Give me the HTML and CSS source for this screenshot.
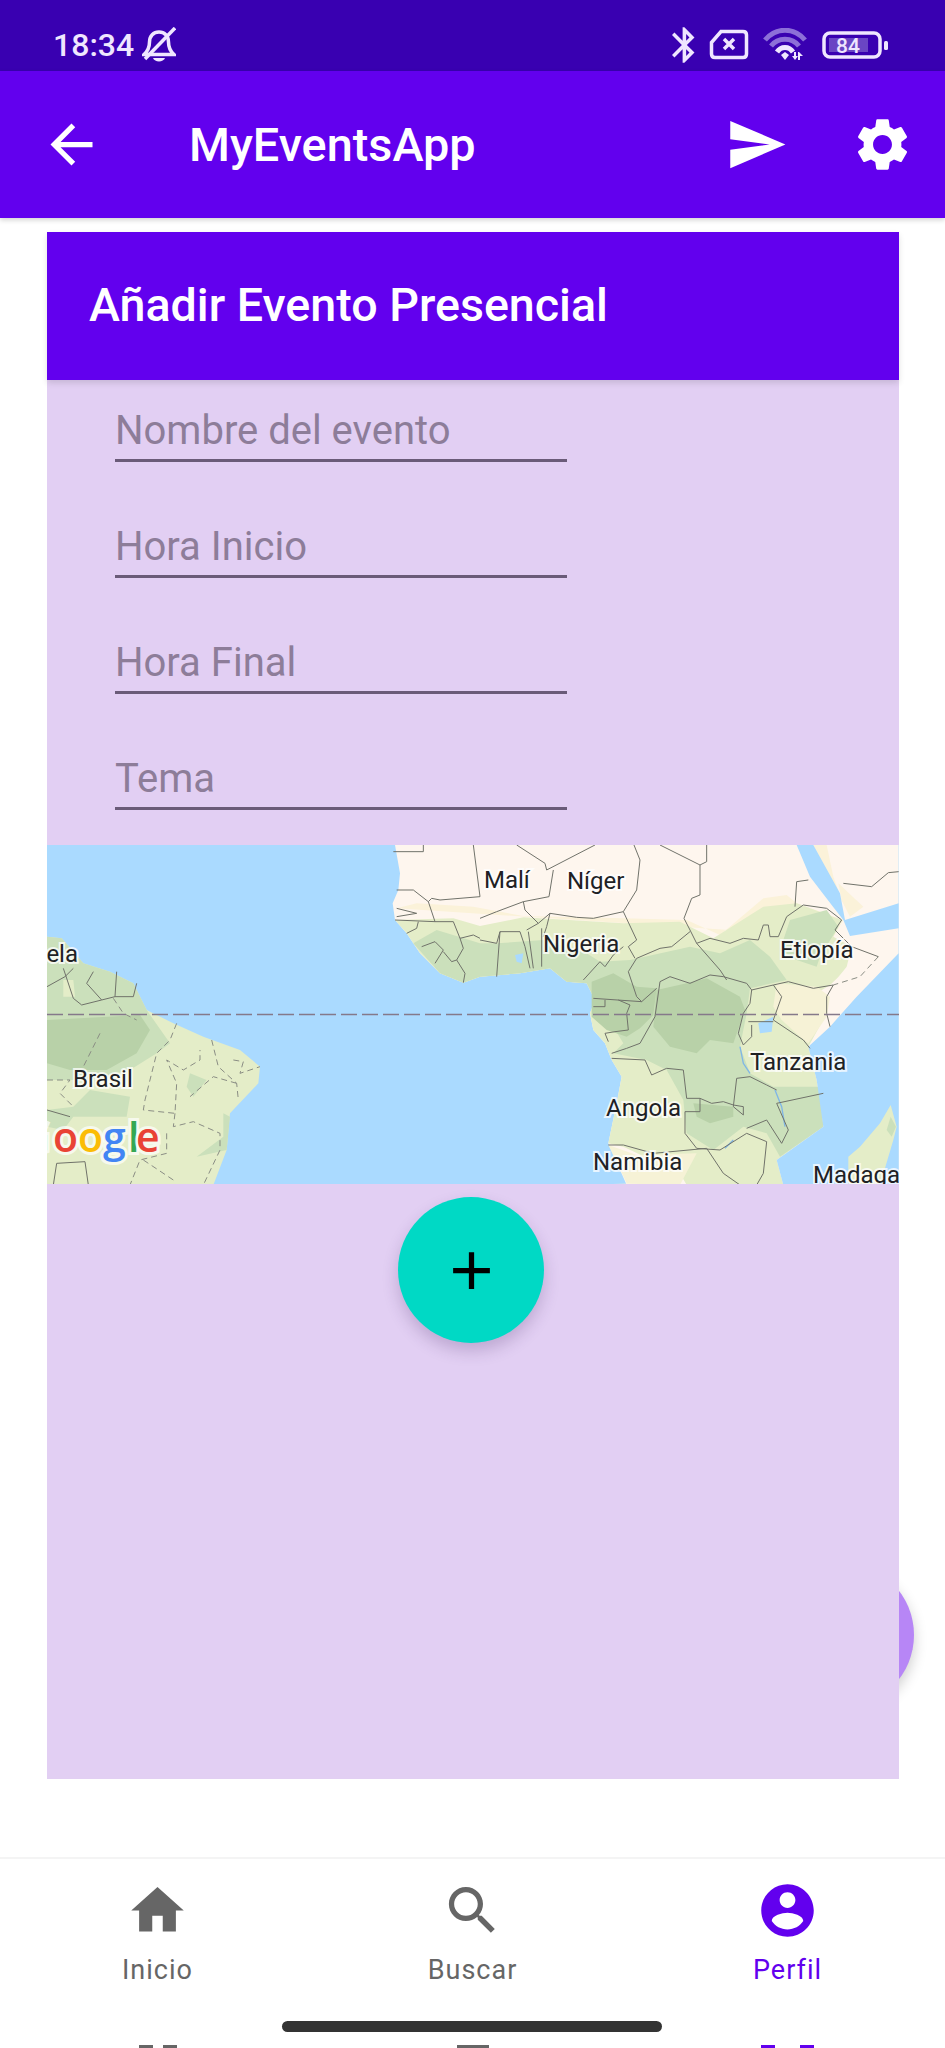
FILE: index.html
```html
<!DOCTYPE html>
<html lang="en">

<head>
    <meta charset="UTF-8">
    <meta name="viewport" content="width=device-width, initial-scale=1.0">
    <title>MyEventsApp</title>
    <link rel="stylesheet" href="styles.css">
</head>

<body>

    <div class="status-bar">
        <span class="status-time">18:34</span>
        <svg class="bell-icon" viewBox="0 0 34 36" width="34" height="36">
            <path class="status-line" d="M2 27.5C6 24 7.500 20 7.500 15C7.500 9 11.500 5 17 5C22.500 5 26.500 9 26.500 15C26.500 20 28 24 32 27.500Z"/>
            <path class="status-line" d="M33 1L3 32"/>
            <path class="status-fill" d="M11 31h12c-1.500 4.500-10.500 4.500-12 0z"/>
        </svg>
        <span class="status-spacer"></span>
        <svg class="bluetooth-icon" viewBox="5 2 13 20" width="23" height="36">
            <path class="status-fill" d="M17.710 7.710L12 2h-1v7.590L6.410 5 5 6.410 10.590 12 5 17.590 6.410 19 11 14.410V22h1l5.710-5.710-4.300-4.290 4.300-4.290zM13 5.830l1.880 1.880L13 9.590V5.830zm1.880 10.460L13 18.170v-3.760l1.880 1.880z"/>
        </svg>
        <svg class="sim-icon" viewBox="0 0 40 31" width="40" height="31">
            <path class="status-line" d="M12 2.500H34Q37.500 2.500 37.500 6V25Q37.500 28.500 34 28.500H6Q2.500 28.500 2.500 25V13.500Z"/>
            <path class="status-line" d="M15 10L25 20M25 10L15 20"/>
        </svg>
        <svg class="wifi-icon" viewBox="0 0 44 33" width="44" height="33">
            <path class="wifi-dim" d="M2 12C13 -1 31 -1 42 12"/>
            <path class="wifi-dim" d="M8 18C15 9 29 9 36 18"/>
            <path class="wifi-bright" d="M14 24C18 18 26 18 30 24"/>
            <path class="status-fill" d="M18 27L22 24L26 27L22 32Z"/>
            <path class="status-fill" d="M31 24h2v4h2l-3 4-3-4h2zM37 32h-2v-8h1l4 4h-3z"/>
        </svg>
        <svg class="battery-icon" viewBox="0 0 66 28" width="66" height="28">
            <rect class="status-line" x="2" y="2" width="56" height="24" rx="6"/>
            <rect class="battery-level" x="7" y="7" width="39" height="14"/>
            <text class="battery-text" x="26" y="22">84</text>
            <rect class="status-fill" x="62" y="10" width="4" height="9" rx="1.500"/>
        </svg>
    </div>

    <div class="toolbar">
        <svg class="icon-63 back-icon" viewBox="0 0 24 24"><path d="M20 11H7.830l5.590-5.590L12 4l-8 8 8 8 1.410-1.410L7.830 13H20v-2z"/></svg>
        <span class="toolbar-title">MyEventsApp</span>
        <span class="status-spacer"></span>
        <svg class="icon-63" viewBox="0 0 24 24"><path d="M2.010 21L23 12 2.010 3 2 10l15 2-15 2z"/></svg>
        <svg class="icon-63 settings-icon" viewBox="0 0 24 24"><path d="M19.140 12.940c.04-.3.06-.61.06-.94 0-.32-.02-.64-.07-.94l2.030-1.580c.18-.14.23-.41.12-.61l-1.920-3.320c-.12-.22-.37-.29-.59-.22l-2.390.96c-.5-.38-1.030-.7-1.620-.94l-.36-2.540c-.04-.24-.24-.41-.48-.41h-3.840c-.24 0-.43.17-.47.41l-.36 2.540c-.59.24-1.130.57-1.620.94l-2.390-.96c-.22-.08-.47 0-.59.22L2.740 8.870c-.12.21-.08.47.12.61l2.030 1.580c-.05.3-.09.63-.09.94s.02.64.07.94l-2.030 1.580c-.18.14-.23.41-.12.61l1.920 3.320c.12.22.37.29.59.22l2.390-.96c.5.38 1.030.7 1.620.94l.36 2.540c.05.24.24.41.48.41h3.840c.24 0 .44-.17.47-.41l.36-2.540c.59-.24 1.130-.56 1.620-.94l2.390.96c.22.08.47 0 .59-.22l1.920-3.320c.12-.22.07-.47-.12-.61l-2.010-1.580zM12 15.600c-1.980 0-3.600-1.620-3.600-3.600s1.620-3.600 3.600-3.600 3.600 1.620 3.600 3.600-1.620 3.600-3.600 3.600z"/></svg>
    </div>

    <div class="content">
        <div class="back-fab"></div>

        <div class="event-card">
            <div class="card-header">Añadir Evento Presencial</div>

            <div class="event-form">
                <div class="field">Nombre del evento</div>
                <div class="field">Hora Inicio</div>
                <div class="field">Hora Final</div>
                <div class="field">Tema</div>
            </div>

            <svg class="map" viewBox="0 0 852 339" width="852" height="339">
                <rect class="ocean" width="852" height="339"/>

                <!-- africa, coordinates taken at 3x -->
                <g transform="translate(433,-5) scale(.33333)">
                    <path class="desert" d="M-255 15H1256V1035H440L385 910L410 790L425 710L395 660L375 610L340 570L330 520L345 480L320 430L260 425L210 385L120 400L0 410L-50 428L-120 400L-180 340L-220 280L-255 240L-262 190L-245 150L-240 100Z"/>
                    <path class="sand" d="M-250 205L-190 190L-20 200L130 228L430 235L620 240L720 285L850 175L920 165L950 190L1090 240L1060 290Z"/>
                    <path class="sand" d="M1000 15L1040 15L1060 110L1085 180L1075 130L1150 200L1110 230Z"/>
                    <path class="land" d="M-255 240L-80 235L0 258L130 232L430 250L600 245L700 295L850 200L950 190L1085 240L1060 290L1115 320L1140 350L1050 435L1010 460L1040 520L985 620L1010 720L1030 860L890 960L910 1035H620L600 1000L430 920L385 910L410 790L425 710L395 660L375 610L340 570L330 520L345 480L320 430L260 425L210 385L120 400L0 410L-50 428L-120 400L-180 340L-220 280Z"/>
                    <path class="desert" d="M1115 320L1195 350L1140 420L1060 435L1050 560L1010 600L1040 470L1060 430L1100 380Z"/>
                    <path class="sand-light" d="M890 430L1010 440L1050 470L1040 530L985 610L960 590L905 540L880 500Z"/>
                    <path class="sand-light" d="M400 1030L440 1030L385 915L470 945L650 940L600 1035Z"/>
                    <path class="forest" d="M0 310L50 310L190 300L320 340L360 365L450 360L630 320L720 340L810 300L870 350L920 420L810 445L800 520L780 620L810 700L880 740L1020 740L1030 860L900 950L860 880L790 860L700 930L620 880L610 780L560 690L500 660L400 640L430 610L400 560L345 480L320 430L260 425L210 385L120 400L0 410Z"/>
                    <path class="forest" d="M-200 310L-130 270L0 310V410L-50 428L-120 400Z"/>
                    <path class="forest" d="M930 240L1040 210L1075 260L1020 350L1010 380L950 360L900 330Z"/>
                    <path class="forest-dark" d="M335 425L400 400L470 440L530 445L520 525L480 565L440 590L380 570L335 530Z"/>
                    <path class="forest-dark" d="M530 450L620 430L680 415L780 470L795 510L760 610L690 600L650 640L570 620L520 560Z"/>
                    <path class="forest-dark" d="M640 790L760 800L760 830L690 850L650 830Z"/>
                    <path class="ocean" d="M1256 340L1130 470L1050 560L985 620L1010 720L1030 860L890 960L910 1035H1256Z"/>
                    <path class="land" d="M1232 795L1250 860L1240 900L1200 1035H1105L1105 950L1140 920L1200 850Z"/>
                    <path class="forest" d="M1232 830L1248 860L1235 890L1220 870Z"/>
                    <path class="ocean" d="M950 15H1000L1080 160L1095 240L1256 190V265L1110 288L1090 240L1055 195L990 110Z"/>
                    <path class="ocean" d="M835 550L880 530L875 575L840 580Z"/>
                    <path class="ocean" d="M105 345L130 340L125 370L110 365Z"/>
                    <path class="river" d="M780 620L790 670L810 700M885 750L905 800L915 860M735 925L760 900"/>
                    <path class="border" d="M110 15L195 70L200 90L345 15M220 90L207 170L130 185L50 215L0 235"/>
                    <path class="border" d="M130 185L135 210L175 250L210 220L290 232L340 235L430 215L470 150L480 60L462 15"/>
                    <path class="border" d="M540 15L660 75L680 65L680 15M660 75L660 165L635 175L612 235L630 270L650 310L690 295L750 310L790 295L835 300L850 255L865 255L870 290L895 290"/>
                    <path class="border" d="M630 275L575 320L540 325L470 355L445 395L470 470L485 485M430 215L470 300L445 320L465 355M210 220L200 260L190 290M650 310L720 390L740 420"/>
                    <path class="border" d="M540 425L570 410L630 430L690 405L730 410L800 430L815 450L880 435L925 425L1000 445L1060 435L1040 470L1040 520L1050 560"/>
                    <path class="border" d="M880 435L905 470L880 540L970 600L990 625M805 545H880M815 450L810 490L790 520L775 580L790 615L815 590L815 555"/>
                    <path class="border" d="M540 425L525 530L480 610L440 625L395 640M395 655L495 660L515 705L560 685L610 690L620 775L660 775L695 790L730 785L760 795L790 800L790 825L760 800L770 715L810 710L860 735L890 750"/>
                    <path class="border" d="M660 775L660 815L615 815L615 880L650 925L720 930L800 880L860 905L850 1000L830 1035M385 915L430 915L520 940L680 925L730 1000L780 1035"/>
                    <path class="border" d="M800 865L860 840L905 910L925 870L890 790L1030 760M340 475L485 485L530 445M340 500L375 500L375 480M415 480L450 495L440 520L445 570L405 575L375 580L385 605"/>
                    <path class="border" d="M895 290L920 230L970 195L1040 205L1085 240L1065 270L1115 320L1195 350M945 200L950 125L985 120M1090 130L1175 140L1225 98L1256 95"/>
                    <path class="border" d="M0 300L50 310L60 275L120 275L135 320L150 385M60 275L50 410M145 275L160 385M185 265L185 380M175 250L140 270M360 365L310 420M360 365L375 380L400 345L430 320"/>
                    <path class="border-dash" d="M1195 350L1140 410L1060 435"/>
                    <!-- west africa -->
                    <g transform="translate(-1350,0)">
                        <path class="border" d="M1090 35L1180 35L1180 15M1330 15L1350 170L1230 180L1205 175L1195 185L1150 150L1100 150M1195 185L1215 245L1270 245L1290 295L1330 285L1350 295"/>
                        <path class="border" d="M1100 205L1160 220L1100 230M1095 240L1215 245M1165 245L1160 265L1130 280M1290 295L1300 325L1280 360L1305 400L1300 428M1175 320L1215 305L1240 330L1215 370M1240 335L1265 365L1280 360"/>
                    </g>
                </g>

                <!-- south america -->
                <g transform="translate(-17,-5) scale(.33333)">
                    <path class="land" d="M51 290L95 295L160 370L240 395L310 430L350 510L430 550L520 590L630 630L690 680L685 730L600 820L590 930L550 1035H51Z"/>
                    <path class="forest" d="M51 290L95 295L160 370L240 395L310 430L350 510L420 610L380 640L300 690L170 720L51 720Z"/>
                    <path class="forest-dark" d="M51 540L330 525L360 570L320 640L230 690L120 690L51 670Z"/>
                    <path class="forest" d="M51 810L130 800L180 750L300 770L290 830L240 830L130 830L100 870L51 860Z"/>
                    <path class="forest" d="M480 700L530 720L490 770L470 740ZM580 820L600 830L590 930L500 950L580 890Z"/>
                    <path class="land" d="M100 420L130 420L135 470L100 470Z"/>
                    <path class="border" d="M51 440L105 410L130 385M100 385L130 475L155 495L215 480L255 470L310 470L320 430M190 395L170 430L215 480M260 395L255 470"/>
                    <path class="border" d="M80 970L165 965L175 1035M70 1035L80 970M51 810L120 830"/>
                    <path class="border-dash" d="M250 475L280 520L320 540M440 550L420 600L380 640L360 720L345 780L340 810L435 820L440 730L410 660L460 690L510 660L510 630M210 580L160 680M545 600L565 680L620 730L625 780M620 730L550 710L480 770"/>
                    <path class="border-dash" d="M435 820L430 860L490 845L570 880L570 930L520 1035M410 880L410 940L330 960L300 1035M340 960L430 1020M610 660L640 665L630 700L690 680M51 720L120 720L90 760L130 800"/>
                </g>

                <line class="equator" x1="0" y1="169.500" x2="852" y2="169.500"/>

                <text class="map-label" x="31" y="117" text-anchor="end">Venezuela</text>
                <text class="map-label" x="26" y="242">Brasil</text>
                <text class="map-label" x="437" y="43">Malí</text>
                <text class="map-label" x="520" y="44">Níger</text>
                <text class="map-label" x="496" y="107">Nigeria</text>
                <text class="map-label" x="733" y="113">Etiopía</text>
                <text class="map-label" x="703" y="225">Tanzania</text>
                <text class="map-label" x="559" y="271">Angola</text>
                <text class="map-label" x="546" y="325">Namibia</text>
                <text class="map-label" x="766" y="338">Madagascar</text>

                <text class="map-logo" x="-27 6 31 56 81 89" y="307"><tspan class="logo-blue">G</tspan><tspan class="logo-red">o</tspan><tspan class="logo-yellow">o</tspan><tspan class="logo-blue">g</tspan><tspan class="logo-green">l</tspan><tspan class="logo-red">e</tspan></text>
            </svg>

            <div class="card-bottom">
                <div class="add-fab">
                    <svg class="icon-63" viewBox="0 0 24 24"><path d="M19 13h-6v6h-2v-6H5v-2h6V5h2v6h6v2z"/></svg>
                </div>
            </div>
        </div>
    </div>

    <div class="bottom-nav">
        <div class="nav-items">
            <div class="nav-item">
                <svg class="icon-63" viewBox="0 0 24 24"><path d="M10 20v-6h4v6h5v-8h3L12 3 2 12h3v8z"/></svg>
                <span class="nav-label">Inicio</span>
            </div>
            <div class="nav-item">
                <svg class="icon-63" viewBox="0 0 24 24"><path d="M15.500 14h-.79l-.28-.27C15.410 12.590 16 11.110 16 9.500 16 5.910 13.090 3 9.500 3S3 5.910 3 9.500 5.910 16 9.500 16c1.610 0 3.090-.59 4.230-1.570l.27.28v.79l5 4.990L20.490 19l-4.990-5zm-6 0C7.010 14 5 11.990 5 9.500S7.010 5 9.500 5 14 7.010 14 9.500 11.990 14 9.500 14z"/></svg>
                <span class="nav-label">Buscar</span>
            </div>
            <div class="nav-item active">
                <svg class="icon-63" viewBox="0 0 24 24"><path d="M12 2C6.480 2 2 6.480 2 12s4.480 10 10 10 10-4.480 10-10S17.520 2 12 2zm0 3c1.660 0 3 1.340 3 3s-1.340 3-3 3-3-1.340-3-3 1.340-3 3-3zm0 14.200c-2.500 0-4.710-1.280-6-3.220.03-1.990 4-3.080 6-3.080 1.990 0 5.970 1.090 6 3.080-1.290 1.940-3.500 3.220-6 3.220z"/></svg>
                <span class="nav-label">Perfil</span>
            </div>
        </div>

        <div class="nav-peek">
            <div class="peek-cell"><i class="peek-bar"></i><i class="peek-bar"></i></div>
            <div class="peek-cell"><i class="peek-wide"></i></div>
            <div class="peek-cell peek-active"><i class="peek-bar"></i><i class="peek-bar"></i></div>
        </div>

        <div class="home-indicator"></div>
    </div>

</body>

</html>
```

FILE: styles.css
```css
body {
    font-family: Roboto, "Liberation Sans", sans-serif;
    display: flex;
    flex-direction: column;
    width: 945px;
    height: 2048px;
    margin: 0;
    overflow: hidden;
    background-color: #fff;
}

.icon-63 {
    width: 63px;
    height: 63px;
    flex: none;
    fill: currentColor;
}

/* status bar */
.status-bar {
    display: flex;
    align-items: center;
    height: 71px;
    flex: none;
    padding: 18px 57px 0 53px;
    box-sizing: border-box;
    background-color: #3900b1;
    color: #efe6ff;
}

.status-time {
    font-size: 32px;
    font-weight: 500;
    margin-right: 8px;
}

.status-spacer {
    flex: 1;
}

.status-line {
    fill: none;
    stroke: #efe6ff;
    stroke-width: 3.5;
}

.status-fill {
    fill: #efe6ff;
}

.bluetooth-icon {
    margin-right: 14px;
}

.sim-icon {
    margin-right: 14px;
}

.wifi-icon {
    margin-right: 15px;
}

.wifi-dim,
.wifi-bright {
    fill: none;
    stroke-width: 5;
}

.wifi-dim {
    stroke: #8d6fd8;
}

.wifi-bright {
    stroke: #efe6ff;
}

.battery-level {
    fill: #6a45c4;
}

.battery-text {
    fill: #efe6ff;
    font-size: 21px;
    font-weight: 500;
    text-anchor: middle;
}

/* toolbar */
.toolbar {
    display: flex;
    align-items: center;
    height: 147px;
    flex: none;
    padding: 0 31px 0 40px;
    box-sizing: border-box;
    background-color: #6200ee;
    color: #fff;
    box-shadow: 0 2px 5px rgba(0, 0, 0, .18);
    position: relative;
}

.toolbar-title {
    font-size: 46.800px;
    font-weight: 500;
    margin-left: 86px;
}

.settings-icon {
    margin-left: 63px;
}

/* content */
.content {
    flex: 1;
    padding-top: 14px;
    padding-left: 47px;
    position: relative;
}

.back-fab {
    position: absolute;
    left: 768px;
    top: 1344px;
    width: 146px;
    height: 146px;
    border-radius: 50%;
    background-color: #b786f6;
    box-shadow: 0 6px 14px rgba(0, 0, 0, .2);
}

.event-card {
    display: flex;
    flex-direction: column;
    width: 852px;
    height: 1547px;
    background-color: #e2cff3;
    position: relative;
}

.card-header {
    display: flex;
    align-items: center;
    height: 148px;
    flex: none;
    padding-left: 42px;
    padding-bottom: 2px;
    box-sizing: border-box;
    background-color: #6200ee;
    color: #fff;
    font-size: 46.600px;
    font-weight: 500;
    box-shadow: 0 3px 6px rgba(0, 0, 0, .12);
    position: relative;
}

.event-form {
    display: flex;
    flex-direction: column;
    gap: 46px;
    padding: 11px 0 35px 68px;
}

.field {
    display: flex;
    align-items: flex-end;
    width: 452px;
    height: 71px;
    padding-bottom: 4px;
    box-sizing: border-box;
    border-bottom: 3px solid #6a5b78;
    color: #8d7d99;
    font-size: 40px;
    line-height: 48px;
}

.field + .field {
    margin-top: -1px;
}

/* map */
.map {
    display: block;
    flex: none;
}

.ocean { fill: #aadaff; }
.desert { fill: #fef6ee; }
.sand { fill: #fbf2d9; }
.sand-light { fill: #f6f2d6; }
.land { fill: #e4edc8; }
.forest { fill: #cbe0bb; }
.forest-dark { fill: #b8d1a8; }

.border {
    fill: none;
    stroke: #6f7169;
    stroke-width: 3;
}

.border-dash {
    fill: none;
    stroke: #8a8d84;
    stroke-width: 3;
    stroke-dasharray: 18 12;
}

.river {
    fill: none;
    stroke: #7fb6e6;
    stroke-width: 4;
}

.equator {
    stroke: #85798a;
    stroke-width: 1.500;
    stroke-dasharray: 16 5;
}

.map-label {
    fill: #202124;
    font-size: 24px;
    stroke: #fff;
    stroke-width: 4px;
    stroke-opacity: .75;
    paint-order: stroke;
}

.map-logo {
    font-family: "Open Sans", sans-serif;
    font-size: 41px;
    font-weight: 600;
    stroke: #fff;
    stroke-width: 6px;
    stroke-opacity: .7;
    paint-order: stroke;
}

.logo-blue { fill: #4285f4; }
.logo-red { fill: #e94335; }
.logo-yellow { fill: #fbbc05; }
.logo-green { fill: #34a853; }

.card-bottom {
    display: flex;
    justify-content: center;
    flex: 1;
    padding: 13px 4px 0 0;
}

.add-fab {
    display: flex;
    align-items: center;
    justify-content: center;
    width: 146px;
    height: 146px;
    border-radius: 50%;
    background-color: #00d9c5;
    color: #000;
    box-shadow: 0 8px 16px rgba(60, 30, 90, .22);
}

/* bottom nav */
.bottom-nav {
    display: flex;
    flex-direction: column;
    height: 191px;
    flex: none;
    box-sizing: border-box;
    padding-top: 20px;
    border-top: 2px solid #f4f4f4;
    position: relative;
}

.nav-items {
    display: flex;
    flex: 1;
}

.nav-item {
    display: flex;
    flex: 1;
    flex-direction: column;
    align-items: center;
    color: #666;
}

.nav-item.active {
    color: #6200ee;
}

.nav-label {
    margin-top: 11px;
    font-size: 27px;
    line-height: 34px;
    letter-spacing: 1px;
}

.nav-peek {
    display: flex;
    height: 3px;
    flex: none;
}

.peek-cell {
    display: flex;
    flex: 1;
    justify-content: center;
    gap: 10px;
    color: #666;
}

.peek-active {
    gap: 25px;
    color: #6200ee;
}

.peek-bar {
    width: 14px;
    background-color: currentColor;
}

.peek-wide {
    width: 32px;
    background-color: currentColor;
}

.home-indicator {
    position: absolute;
    left: 282px;
    bottom: 16px;
    width: 380px;
    height: 11px;
    border-radius: 6px;
    background-color: #333;
}
```
